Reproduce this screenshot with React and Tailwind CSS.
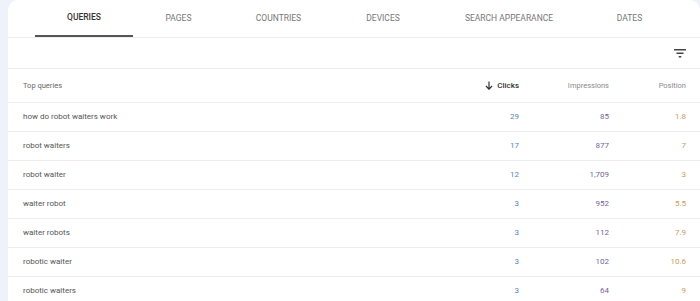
import * as React from "react";

const tabs = [
  { label: "QUERIES", w: "w-[98px]", active: true },
  { label: "PAGES", w: "w-[91px]" },
  { label: "COUNTRIES", w: "w-[109px]" },
  { label: "DEVICES", w: "w-[100px]" },
  { label: "SEARCH APPEARANCE", w: "w-[152px]" },
  { label: "DATES", w: "w-[89px]" },
];

const rows = [
  ["how do robot waiters work", "29", "85", "1.8"],
  ["robot waiters", "17", "877", "7"],
  ["robot waiter", "12", "1,709", "3"],
  ["waiter robot", "3", "952", "5.5"],
  ["waiter robots", "3", "112", "7.9"],
  ["robotic waiter", "3", "102", "10.6"],
  ["robotic waiters", "3", "64", "9"],
];

function FilterIcon() {
  return (
    <svg width="12" height="9" viewBox="0 0 12 9" className="text-[#444]">
      <rect x="0" y="0" width="12" height="1.5" fill="currentColor" />
      <rect x="2.5" y="3.5" width="7" height="1.5" fill="currentColor" />
      <rect x="4.75" y="7" width="2.5" height="1.5" fill="currentColor" />
    </svg>
  );
}

function SortArrow() {
  return (
    <svg width="8" height="9" viewBox="0 0 8 9" className="text-[#333]">
      <path d="M4 0.5 V8.2 M1 5 L4 8.2 L7 5" stroke="currentColor" strokeWidth="1.2" fill="none" />
    </svg>
  );
}

export default function App() {
  return (
    <div className="w-[700px] h-[301px] overflow-hidden bg-[#eef2fb] pl-[8px]" style={{ fontFamily: "Roboto, 'Liberation Sans', sans-serif" }}>
      <div className="h-full bg-white rounded-t-[10px]">
        {/* tabs */}
        <div className="flex h-[38px] pl-[27px] border-b border-[#ededed]">
          {tabs.map((t) => (
            <div
              key={t.label}
              className={`${t.w} flex items-center justify-center text-[8.5px] ${
                t.active ? "text-[#333] font-medium border-b-2 border-[#555]" : "text-[#777]"
              }`}
            >
              {t.label}
            </div>
          ))}
        </div>

        {/* filter */}
        <div className="h-[31px] flex items-center justify-end pr-[14px] border-b border-[#ededed]">
          <FilterIcon />
        </div>

        {/* header */}
        <div className="grid grid-cols-[1fr_90px_90px_77px] h-[34px] items-center pl-[15px] pr-[14px] border-b border-[#ededed] text-[7.5px]">
          <div className="text-[#666]">Top queries</div>
          <div className="flex items-center justify-end gap-[4px] text-[#333] font-medium text-[8px]">
            <SortArrow />
            Clicks
          </div>
          <div className="text-right text-[#8a8a8a]">Impressions</div>
          <div className="text-right text-[#8a8a8a]">Position</div>
        </div>

        {rows.map((r) => (
          <div
            key={r[0]}
            className="grid grid-cols-[1fr_90px_90px_77px] h-[29px] items-center pl-[15px] pr-[14px] border-b border-[#ededed] text-[8px]"
          >
            <div className="text-[#555]">{r[0]}</div>
            <div className="text-right text-[#5684b8]">{r[1]}</div>
            <div className="text-right text-[#72649a]">{r[2]}</div>
            <div className="text-right text-[#c89a5c]">{r[3]}</div>
          </div>
        ))}
      </div>
    </div>
  );
}
